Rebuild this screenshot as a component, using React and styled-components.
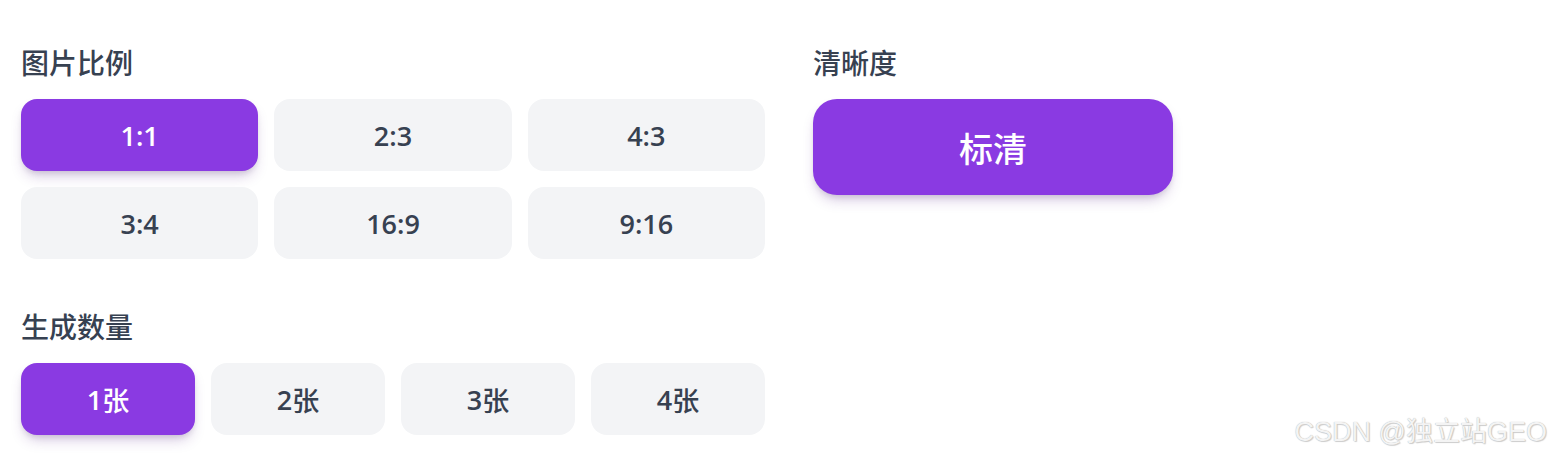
import React, { useState } from "react";
import styled, { createGlobalStyle, css } from "styled-components";

const GlobalStyle = createGlobalStyle`
  html, body { margin: 0; padding: 0; background: #ffffff; }
  body {
    font-family: "Open Sans", "Noto Sans CJK SC", sans-serif;
    color: #374151;
  }
`;

const Page = styled.div`
  position: relative;
  width: 1550px;
  height: 458px;
  box-sizing: border-box;
  padding: 41px 0 0 21px;
  display: flex;
  align-items: flex-start;
  gap: 48px;
  overflow: hidden;
`;

const Column = styled.div`
  width: ${(p) => p.$width}px;
  display: flex;
  flex-direction: column;
  gap: 46px;
`;

const Section = styled.section`
  display: flex;
  flex-direction: column;
`;

const Heading = styled.h3`
  margin: 0 0 16px;
  font-family: "Noto Sans CJK SC", sans-serif;
  font-size: 28px;
  line-height: 42px;
  font-weight: 500;
  color: #374151;
`;

const Grid = styled.div`
  display: grid;
  grid-template-columns: repeat(${(p) => p.$cols}, 1fr);
  gap: 16px;
`;

const Option = styled.button`
  border: none;
  outline: none;
  cursor: pointer;
  font-family: "Open Sans", "Noto Sans CJK SC", sans-serif;
  font-weight: 600;
  font-size: ${(p) => (p.$large ? 34 : 27)}px;
  height: ${(p) => (p.$large ? 96 : 72)}px;
  border-radius: ${(p) => (p.$large ? 24 : 16)}px;
  background: #f3f4f6;
  color: #374151;
  display: flex;
  align-items: center;
  justify-content: center;
  padding: 0;
  ${(p) =>
    p.$active &&
    css`
      background: #8a3ae2;
      color: #ffffff;
      box-shadow: 0 8px 14px -4px rgba(90, 40, 140, 0.28), 0 3px 6px -2px rgba(0, 0, 0, 0.12);
    `}
`;

const CjkText = styled.span`
  font-family: "Noto Sans CJK SC", sans-serif;
  font-weight: 500;
`;

const Watermark = styled.div`
  position: absolute;
  right: 3px;
  bottom: 10px;
  font-family: "Liberation Sans", "Noto Sans CJK SC", sans-serif;
  font-size: 27px;
  line-height: 32px;
  color: #f4f4f4;
  text-shadow: 0 0 1px #a8a8a8, 1px 1px 1px #d0d0d0;
  pointer-events: none;
`;

const ratios = ["1:1", "2:3", "4:3", "3:4", "16:9", "9:16"];
const counts = [1, 2, 3, 4];

export default function App() {
  const [ratio, setRatio] = useState("1:1");
  const [count, setCount] = useState(1);
  return (
    <>
      <GlobalStyle />
      <Page>
        <Column $width={744}>
          <Section>
            <Heading>图片比例</Heading>
            <Grid $cols={3}>
              {ratios.map((r) => (
                <Option key={r} $active={r === ratio} onClick={() => setRatio(r)}>
                  {r}
                </Option>
              ))}
            </Grid>
          </Section>
          <Section>
            <Heading>生成数量</Heading>
            <Grid $cols={4}>
              {counts.map((c) => (
                <Option key={c} $active={c === count} onClick={() => setCount(c)}>
                  {c}
                  <CjkText>张</CjkText>
                </Option>
              ))}
            </Grid>
          </Section>
        </Column>
        <Column $width={360}>
          <Section>
            <Heading>清晰度</Heading>
            <Grid $cols={1}>
              <Option $large $active>
                <CjkText>标清</CjkText>
              </Option>
            </Grid>
          </Section>
        </Column>
        <Watermark>CSDN @独立站GEO</Watermark>
      </Page>
    </>
  );
}
